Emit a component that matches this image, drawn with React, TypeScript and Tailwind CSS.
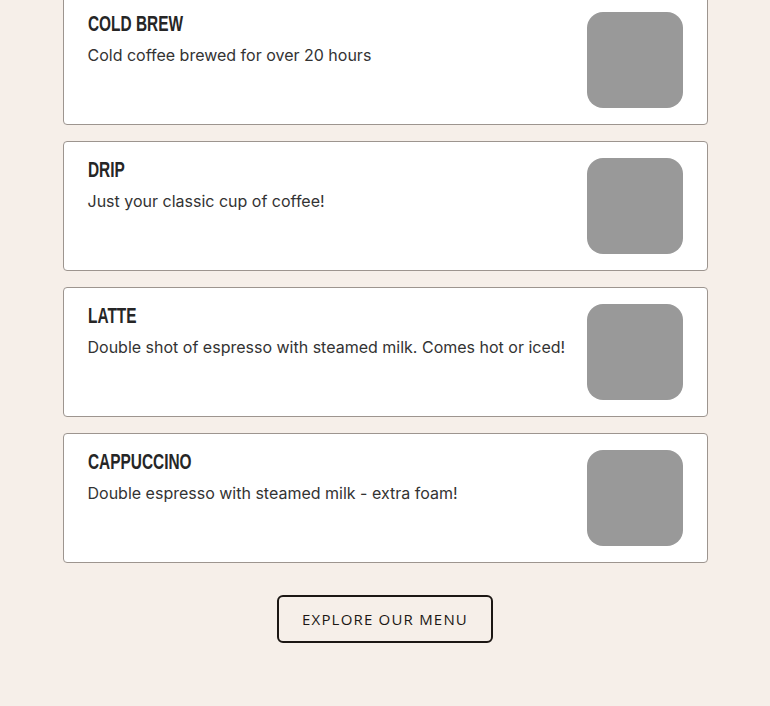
const items = [
  { name: "Cold Brew", desc: "Cold coffee brewed for over 20 hours" },
  { name: "Drip", desc: "Just your classic cup of coffee!" },
  { name: "Latte", desc: "Double shot of espresso with steamed milk. Comes hot or iced!" },
  { name: "Cappuccino", desc: "Double espresso with steamed milk - extra foam!" },
];

function MenuCard({ name, desc }: { name: string; desc: string }) {
  return (
    <div className="flex items-start justify-between gap-4 rounded-[4px] border border-[#9d958f] bg-white px-6 py-4">
      <div className="flex flex-col items-start">
        {/* condensed display face isn't installed, so narrow Liberation Sans bold */}
        <h3
          className="inline-block origin-left scale-x-[0.7] text-[22px] leading-[24px] font-bold uppercase text-[#262626]"
          style={{ fontFamily: '"Liberation Sans", Arial, sans-serif' }}
        >
          {name}
        </h3>
        <p className="mt-[7px] text-[16px] leading-[24px] text-[#333333]" style={{ fontFamily: 'Inter, "Noto Sans", sans-serif' }}>
          {desc}
        </p>
      </div>
      <div className="h-24 w-24 shrink-0 rounded-2xl bg-[#999999]" />
    </div>
  );
}

export default function App() {
  return (
    <div className="flex min-h-screen flex-col bg-[#f6efe9]">
      <div className="mx-auto -mt-[5px] flex w-[645px] flex-col gap-4">
        {items.map((item) => (
          <MenuCard key={item.name} {...item} />
        ))}
      </div>
      <div className="flex justify-center pt-8">
        <button
          className="h-12 w-[216px] rounded-md border-2 border-[#1c1714] text-[15px] uppercase tracking-[1.2px] text-[#1c1714]"
          style={{ fontFamily: '"Open Sans", "Noto Sans", sans-serif' }}
        >
          Explore our menu
        </button>
      </div>
    </div>
  );
}
